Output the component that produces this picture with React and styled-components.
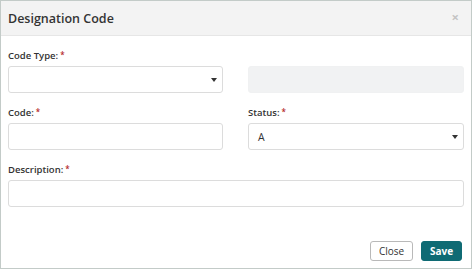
import React from "react";
import styled, { createGlobalStyle } from "styled-components";

const GlobalStyle = createGlobalStyle`
    * { box-sizing: border-box; }
    body {
        margin: 0;
        background: #ffffff;
        font-family: "Open Sans", "Noto Sans", sans-serif;
    }
`;

const Modal = styled.div`
    width: 472px;
    height: 269px;
    border: 1px solid #c3cbc8;
    background: #ffffff;
    display: flex;
    flex-direction: column;
`;

const Header = styled.div`
    height: 35px;
    background: #f3f3f3;
    border-bottom: 1px solid #e6e6e6;
    display: flex;
    align-items: center;
    justify-content: space-between;
    padding: 0 12px 0 7px;
`;

const Title = styled.h2`
    margin: 0;
    font-size: 12.5px;
    font-weight: 600;
    color: #333333;
`;

const CloseX = styled.span`
    font-size: 13px;
    color: #c4c4c4;
    font-weight: 700;
    line-height: 1;
    margin-top: -2px;
`;

const Body = styled.div`
    flex: 1;
    padding: 13px 8px 0 7px;
    display: grid;
    grid-template-columns: 215px 216px;
    column-gap: 25px;
    row-gap: 13px;
    align-content: start;
`;

const Field = styled.div`
    grid-column: ${({ $wide }) => ($wide ? "1 / span 2" : "auto")};
    display: flex;
    flex-direction: column;
`;

const Label = styled.label`
    font-size: 9.5px;
    font-weight: 600;
    color: #333333;
    height: 14px;
    line-height: 14px;
    margin-bottom: 3px;
    visibility: ${({ $hidden }) => ($hidden ? "hidden" : "visible")};
`;

const Star = styled.span`
    color: #b5292b;
    font-size: 8px;
    vertical-align: top;
    margin-left: 2px;
    position: relative;
    top: -1px;
`;

const Box = styled.div`
    position: relative;
    height: 27px;
    border: 1px solid ${({ $disabled }) => ($disabled ? "#f0f1f2" : "#dcdcdc")};
    border-radius: 3px;
    background: ${({ $disabled }) => ($disabled ? "#f1f2f3" : "#ffffff")};
    display: flex;
    align-items: center;
    padding: 0 5px 0 9px;
    font-size: 10.5px;
    color: #333333;
`;

const Value = styled.span`
    flex: 1;
`;

const Caret = styled.span`
    width: 0;
    height: 0;
    border-left: 3.5px solid transparent;
    border-right: 3.5px solid transparent;
    border-top: 4px solid #333333;
`;

const Footer = styled.div`
    display: flex;
    justify-content: flex-end;
    gap: 8px;
    padding: 0 9px 7px 0;
`;

const Button = styled.button`
    height: 20px;
    width: ${({ $primary }) => ($primary ? "41px" : "43px")};
    padding: 0;
    border-radius: 3px;
    font-family: "Open Sans", "Noto Sans", sans-serif;
    font-size: 10px;
    font-weight: ${({ $primary }) => ($primary ? 700 : 400)};
    color: ${({ $primary }) => ($primary ? "#ffffff" : "#333333")};
    background: ${({ $primary }) => ($primary ? "#0f6b74" : "#ffffff")};
    border: 1px solid ${({ $primary }) => ($primary ? "#0f6b74" : "#b9b9b9")};
    cursor: pointer;
`;

const Required = ({ children }) => (
    <Label>
        {children}
        <Star>*</Star>
    </Label>
);

const App = () => {
    return (
        <>
            <GlobalStyle />
            <Modal>
                <Header>
                    <Title>Designation Code</Title>
                    <CloseX>×</CloseX>
                </Header>
                <Body>
                    <Field>
                        <Required>Code Type:</Required>
                        <Box>
                            <Value />
                            <Caret />
                        </Box>
                    </Field>
                    <Field>
                        <Label $hidden>&nbsp;</Label>
                        <Box $disabled />
                    </Field>
                    <Field>
                        <Required>Code:</Required>
                        <Box />
                    </Field>
                    <Field>
                        <Required>Status:</Required>
                        <Box>
                            <Value>A</Value>
                            <Caret />
                        </Box>
                    </Field>
                    <Field $wide>
                        <Required>Description:</Required>
                        <Box />
                    </Field>
                </Body>
                <Footer>
                    <Button>Close</Button>
                    <Button $primary>Save</Button>
                </Footer>
            </Modal>
        </>
    );
};

export default App;
